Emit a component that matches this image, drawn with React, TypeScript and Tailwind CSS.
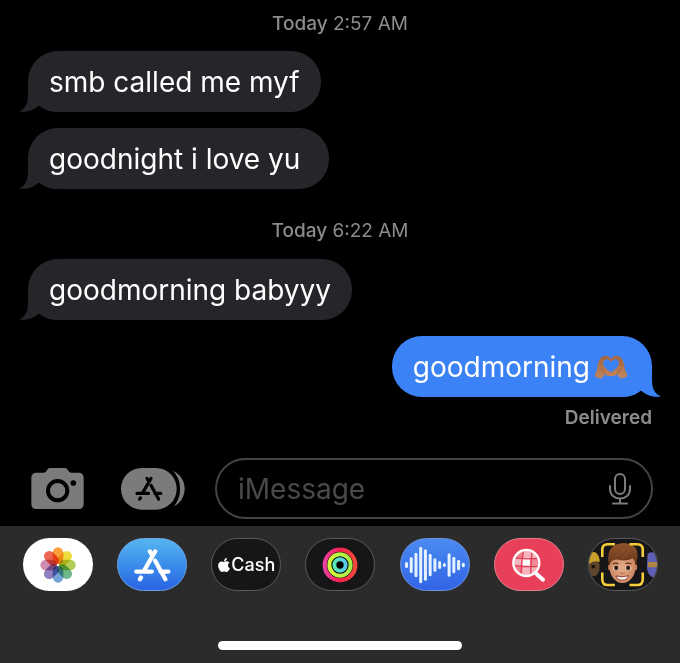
import React from "react";
import { FaApple } from "react-icons/fa";

interface MessageBubbleProps {
  sent?: boolean;
  children: React.ReactNode;
}

interface DrawerAppProps {
  label: string;
  className: string;
  children: React.ReactNode;
}

const BubbleTail: React.FC<{ sent?: boolean }> = ({ sent }) => (
  <svg
    className={
      sent
        ? "absolute bottom-0 -right-[9px] h-8 w-9 -scale-x-100 text-[#3c82f7]"
        : "absolute bottom-0 -left-[9px] h-8 w-9 text-[#26252a]"
    }
    viewBox="0 0 36 32"
    fill="currentColor"
    aria-hidden="true"
  >
    <path d="M9 0V15C9 22 7 29 0 31.4C8 33 15 30 20 25.5C24 29 29 31 36 32V0Z" />
  </svg>
);

const MessageBubble: React.FC<MessageBubbleProps> = ({ sent, children }) => {
  return (
    <div
      className={
        sent
          ? "relative flex h-[61px] w-fit items-center self-end rounded-[30px] bg-[#3c82f7] pr-6 pl-[21px] text-white"
          : "relative flex h-[61px] w-fit items-center rounded-[30px] bg-[#26252a] px-[21px] text-white"
      }
    >
      <BubbleTail sent={sent} />
      <div className="relative flex items-center text-[28px] leading-9 whitespace-pre">
        {children}
      </div>
    </div>
  );
};

const Timestamp: React.FC<{ time: string }> = ({ time }) => (
  <p className="text-center text-[19px] leading-6 text-[#8b8b90]">
    <span className="font-medium">Today</span> {time}
  </p>
);

const HeartHands: React.FC = () => (
  <svg className="ml-1 h-[26px] w-[34px]" viewBox="0 0 36 26" role="img" aria-label="heart hands">
    <defs>
      <linearGradient id="skin" x1="0" y1="0" x2="0" y2="1">
        <stop offset="0" stopColor="#a8673f" />
        <stop offset="1" stopColor="#c08560" />
      </linearGradient>
      <g id="hand">
        <path
          d="M.6 22L3.600 14.500C3.800 9 5.600 4 9.200 1.800C12.200 .2 15.800 1.400 18 4.400V7.400C16 5.200 13.500 4.200 11.600 5.400C9.200 7 9.400 10.600 11.200 13C13 15.200 15.400 16.800 18 18.600V22.600C15.600 23 13.400 22 11.800 20.600L8 25.200C5.400 25.600 2.200 24.200 .6 22Z"
          fill="url(#skin)"
        />
        <path
          d="M6.600 8L8.800 6.800M9 4L11 3.600M5.800 11.600L8.600 10.400M11.800 20.600C10 19 8.800 17 8.400 15"
          fill="none"
          stroke="#8a4f30"
          strokeWidth=".6"
          strokeLinecap="round"
        />
      </g>
    </defs>
    <use href="#hand" />
    <use href="#hand" transform="translate(36 0) scale(-1 1)" />
  </svg>
);

const AppStoreGlyph: React.FC<{ className: string }> = ({ className }) => (
  <svg
    className={className}
    viewBox="370 50 112 102"
    fill="none"
    stroke="currentColor"
    strokeWidth="13"
    strokeLinecap="round"
    aria-hidden="true"
  >
    <path d="M434 60L401 117M391 139L388 144M418 60L424 70M434 88L465 144M377 121H424M450 121H474" />
  </svg>
);

const CameraIcon: React.FC = () => (
  <svg className="h-[42px] w-[53px]" viewBox="93 84 159 126" aria-hidden="true">
    <path
      d="M110 98H128C137 98 138 94 142 89C145 85 148 84 153 84H192C197 84 200 85 203 89C207 94 208 98 217 98H235C246 98 251 104 251 114V192C251 202 246 207 235 207H110C99 207 94 202 94 192V114C94 104 99 98 110 98Z"
      fill="#7b7b7b"
    />
    <circle cx="173" cy="152" r="29" fill="none" stroke="#000" strokeWidth="12" />
    <circle cx="220" cy="129" r="8.5" fill="#000" />
  </svg>
);

const AppsIcon: React.FC = () => (
  <span className="relative block">
    <svg className="h-[42px] w-16" viewBox="364 84 192 126" aria-hidden="true">
      <rect x="400" y="88" width="155" height="117" rx="58" fill="#7b7b7b" />
      <rect x="360" y="70" width="181" height="154" rx="74" fill="#000" />
      <rect x="364" y="84" width="167" height="125" rx="62" fill="#7b7b7b" />
    </svg>
    <AppStoreGlyph className="absolute top-2 left-3.5 h-[25px] w-7 text-black" />
  </span>
);

const MicIcon: React.FC = () => (
  <svg
    className="h-8 w-[22px]"
    viewBox="0 0 22 32"
    fill="none"
    stroke="#7b7b7d"
    strokeWidth="2"
    strokeLinecap="round"
    aria-hidden="true"
  >
    <rect x="6" y="1" width="10" height="20" rx="5" />
    <path d="M1 13V16C1 22 5.500 25.500 11 25.500S21 22 21 16V13M11 25.500V30.500M4 30.500H18" />
  </svg>
);

const petals = ["#f9a03c", "#efdc3e", "#b3cc58", "#70b88c", "#76a3d6", "#8e7fbd", "#cf8db0", "#ec6552"];

const PhotosIcon: React.FC = () => (
  <svg className="h-9 w-9" viewBox="-54 -54 108 108" aria-hidden="true">
    {petals.map((color, i) => (
      <rect
        key={color}
        className="mix-blend-multiply"
        x="-16"
        y="-53"
        width="32"
        height="50"
        rx="16"
        fill={color}
        transform={`rotate(${i * 45})`}
      />
    ))}
  </svg>
);

const FitnessIcon: React.FC = () => (
  <svg className="h-9 w-9" viewBox="-54 -54 108 108" fill="none" aria-hidden="true">
    <defs>
      <linearGradient id="move" x1="0" x2="1">
        <stop offset="0" stopColor="#ea3fa0" />
        <stop offset=".5" stopColor="#f5214f" />
        <stop offset="1" stopColor="#f24a3c" />
      </linearGradient>
      <linearGradient id="exercise" x1="0" x2="1">
        <stop offset="0" stopColor="#d5f83e" />
        <stop offset="1" stopColor="#a4f04a" />
      </linearGradient>
      <linearGradient id="stand" x1="0" x2="1">
        <stop offset="0" stopColor="#5be6b4" />
        <stop offset="1" stopColor="#56c8ee" />
      </linearGradient>
    </defs>
    <circle r="53" fill="#000" />
    <circle r="46" stroke="url(#move)" strokeWidth="13" />
    <circle r="32" stroke="url(#exercise)" strokeWidth="12" />
    <circle r="17" stroke="url(#stand)" strokeWidth="12" />
  </svg>
);

const waveform = [9, 24, 37, 55, 47, 34, 20, 12, 6, 35, 25, 16, 7];

const AudioIcon: React.FC = () => (
  <svg className="h-[38px] w-[60px]" viewBox="0 0 180 114" fill="#e4f1ff" aria-hidden="true">
    {waveform.map((half, i) => (
      <rect key={i} x={i * 14.2} y={57 - half} width="9" height={half * 2} rx="4.500" />
    ))}
  </svg>
);

const ImagesIcon: React.FC = () => (
  <svg className="h-9 w-9" viewBox="360 50 108 108" fill="none" aria-hidden="true">
    <clipPath id="lens">
      <circle cx="406" cy="98" r="36" />
    </clipPath>
    <g clipPath="url(#lens)">
      <rect x="366" y="58" width="80" height="80" fill="#f7b4bd" />
      <rect x="366" y="58" width="28" height="26" fill="#ee7f8f" />
      <rect x="418" y="84" width="28" height="24" fill="#f08a99" />
      <rect x="366" y="108" width="28" height="30" fill="#ee7f8f" />
      <rect x="395" y="86" width="22" height="20" fill="#fff" />
      <path
        d="M398 58Q390 98 390 138M424 58Q418 98 420 138M366 82Q406 88 446 84M366 105Q406 111 446 108"
        stroke="#e33c55"
        strokeWidth="4"
      />
    </g>
    <path d="M436 130L456 148" stroke="#fff" strokeWidth="12" strokeLinecap="round" />
    <circle cx="406" cy="98" r="39" stroke="#fff" strokeWidth="7" />
  </svg>
);

const MemojiIcon: React.FC = () => (
  <svg className="h-full w-full" viewBox="55 25 210 157" fill="none" aria-hidden="true">
    <defs>
      <linearGradient id="hair" x1="0" y1="0" x2="0" y2="1">
        <stop offset="0" stopColor="#8f532c" />
        <stop offset="1" stopColor="#663618" />
      </linearGradient>
      <radialGradient id="face">
        <stop offset="0" stopColor="#e6ad8a" />
        <stop offset="1" stopColor="#cb8762" />
      </radialGradient>
    </defs>
    <ellipse cx="68" cy="112" rx="20" ry="28" fill="#5f452e" />
    <path d="M55 102V74Q62 62 74 66Q88 74 88 96Q70 88 55 102Z" fill="#c9a02c" />
    <circle cx="68" cy="110" r="6" fill="#1d1611" />
    <path d="M236 70Q250 60 265 72V142H250Q232 132 234 104Z" fill="#5d60b4" />
    <path d="M237 96H265V112H238Z" fill="#b08648" />
    <ellipse cx="120" cy="112" rx="6" ry="10" fill="#bd7955" />
    <ellipse cx="198" cy="112" rx="6" ry="10" fill="#bd7955" />
    <path
      d="M119 88Q119 66 158 66T198 88V118Q196 142 176 156Q158 166 141 156Q121 142 119 118Z"
      fill="url(#face)"
    />
    <path
      d="M117 106Q111 82 118 62Q128 40 156 38Q166 36 178 40Q206 46 205 76Q204 94 199 106Q198 92 190 84Q168 96 144 88Q126 88 122 98Z"
      fill="url(#hair)"
    />
    <path d="M134 78Q154 74 164 54M154 84Q172 78 180 60" stroke="#9c6038" strokeWidth="2" />
    <path d="M129 102Q137 97 146 101M168 101Q177 97 186 102" stroke="#5b321b" strokeWidth="4" />
    <ellipse cx="138" cy="115" rx="9" ry="6" fill="#ead9cc" />
    <ellipse cx="177" cy="115" rx="9" ry="6" fill="#ead9cc" />
    <circle cx="139" cy="114" r="6.5" fill="#2b1a12" />
    <circle cx="176" cy="114" r="6.5" fill="#2b1a12" />
    <path d="M151 129Q158 133 165 129" stroke="#b8714f" strokeWidth="4" />
    <path
      d="M138 139Q157 144 177 138Q172 152 158 152Q143 152 138 139Z"
      fill="#f6efea"
      stroke="#8c4434"
      strokeWidth="3"
    />
    <path
      d="M96 80V58Q96 41 113 41H135M180 41H204Q221 41 221 58V80M221 128V150Q221 167 204 167H180M135 167H113Q96 167 96 150V128"
      stroke="#f5cf3a"
      strokeWidth="8"
    />
  </svg>
);

const DrawerApp: React.FC<DrawerAppProps> = ({ label, className, children }) => {
  return (
    <button
      type="button"
      aria-label={label}
      className={`flex h-[53px] w-[70px] shrink-0 items-center justify-center overflow-hidden rounded-[27px] ${className}`}
    >
      {children}
    </button>
  );
};

const App: React.FC = () => {
  return (
    <div className="flex min-h-screen flex-col bg-black font-['Inter','Liberation_Sans',sans-serif]">
      <main className="flex flex-col pt-3 pr-7 pb-7 pl-7">
        <Timestamp time="2:57 AM" />
        <div className="mt-[15px] mb-[30px] flex flex-col gap-4">
          <MessageBubble>smb called me myf</MessageBubble>
          <MessageBubble>{"goodnight i love yu "}</MessageBubble>
        </div>
        <Timestamp time="6:22 AM" />
        <div className="mt-4 mb-[9px] flex flex-col gap-4">
          <MessageBubble>goodmorning babyyy</MessageBubble>
          <MessageBubble sent>
            goodmorning
            <HeartHands />
          </MessageBubble>
        </div>
        <p className="text-right text-[19px] leading-6 font-semibold text-[#8b8b90]">Delivered</p>
      </main>

      <form className="flex items-center pr-[27px] pb-[7px] pl-[31px]">
        <button type="button" aria-label="Camera">
          <CameraIcon />
        </button>
        <button type="button" aria-label="Apps" className="ml-[37px]">
          <AppsIcon />
        </button>
        <div className="ml-[30px] flex h-[61px] min-w-0 flex-1 items-center rounded-full border-2 border-[#444446] pr-5 pl-[21px]">
          <input
            type="text"
            aria-label="Message"
            placeholder="iMessage"
            className="min-w-0 flex-1 bg-transparent text-[28px] leading-9 text-white outline-none placeholder:text-[#4a4a4c]"
          />
          <button type="button" aria-label="Dictate">
            <MicIcon />
          </button>
        </div>
      </form>

      <footer className="flex flex-1 flex-col bg-[#2b2b2c] pt-3">
        <nav className="flex justify-between pr-[22px] pl-[23px]">
          <DrawerApp label="Photos" className="bg-white">
            <PhotosIcon />
          </DrawerApp>
          <DrawerApp label="App Store" className="border border-[#6aa3e0] bg-linear-to-b from-[#55b5f0] to-[#2b62e3] text-white">
            <AppStoreGlyph className="h-[34px] w-[37px]" />
          </DrawerApp>
          <DrawerApp label="Apple Cash" className="border border-[#5a5a5c] bg-[#161618] text-white">
            <FaApple className="h-4 w-3.5" />
            <span className="text-[18px] leading-6 font-medium">Cash</span>
          </DrawerApp>
          <DrawerApp label="Fitness" className="border border-[#5a5a5c] bg-[#161618]">
            <FitnessIcon />
          </DrawerApp>
          <DrawerApp label="Audio" className="border border-[#6b93dc] bg-linear-to-b from-[#4a8af0] to-[#3264e6]">
            <AudioIcon />
          </DrawerApp>
          <DrawerApp label="Images" className="border border-[#e2808c] bg-[#e8405a]">
            <ImagesIcon />
          </DrawerApp>
          <DrawerApp label="Memoji" className="border border-[#5a5a5c] bg-[#161618]">
            <MemojiIcon />
          </DrawerApp>
        </nav>
        <div className="mx-auto mt-[50px] mb-[13px] h-[9px] w-[36%] rounded-full bg-white" />
      </footer>
    </div>
  );
};

export default App;
